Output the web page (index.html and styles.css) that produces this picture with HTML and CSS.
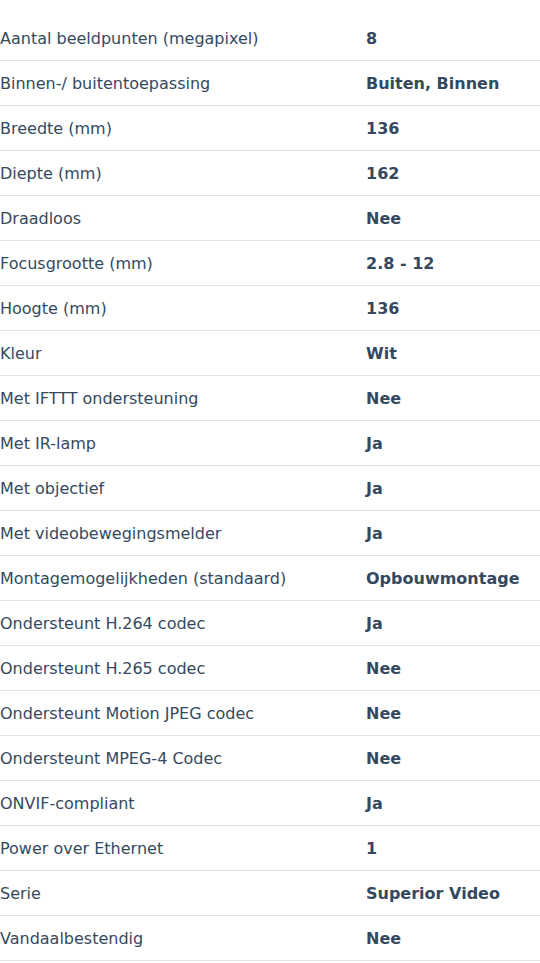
FILE: index.html
```html
<!DOCTYPE html>
<html>
<head>
<meta charset="utf-8">
<link rel="stylesheet" href="styles.css">
</head>
<body>
<div class="specs">
  <div class="row"><div class="label">Aantal beeldpunten (megapixel)</div><div class="value">8</div></div>
  <div class="row"><div class="label">Binnen-/ buitentoepassing</div><div class="value">Buiten, Binnen</div></div>
  <div class="row"><div class="label">Breedte (mm)</div><div class="value">136</div></div>
  <div class="row"><div class="label">Diepte (mm)</div><div class="value">162</div></div>
  <div class="row"><div class="label">Draadloos</div><div class="value">Nee</div></div>
  <div class="row"><div class="label">Focusgrootte (mm)</div><div class="value">2.8 - 12</div></div>
  <div class="row"><div class="label">Hoogte (mm)</div><div class="value">136</div></div>
  <div class="row"><div class="label">Kleur</div><div class="value">Wit</div></div>
  <div class="row"><div class="label">Met IFTTT ondersteuning</div><div class="value">Nee</div></div>
  <div class="row"><div class="label">Met IR-lamp</div><div class="value">Ja</div></div>
  <div class="row"><div class="label">Met objectief</div><div class="value">Ja</div></div>
  <div class="row"><div class="label">Met videobewegingsmelder</div><div class="value">Ja</div></div>
  <div class="row"><div class="label">Montagemogelijkheden (standaard)</div><div class="value">Opbouwmontage</div></div>
  <div class="row"><div class="label">Ondersteunt H.264 codec</div><div class="value">Ja</div></div>
  <div class="row"><div class="label">Ondersteunt H.265 codec</div><div class="value">Nee</div></div>
  <div class="row"><div class="label">Ondersteunt Motion JPEG codec</div><div class="value">Nee</div></div>
  <div class="row"><div class="label">Ondersteunt MPEG-4 Codec</div><div class="value">Nee</div></div>
  <div class="row"><div class="label">ONVIF-compliant</div><div class="value">Ja</div></div>
  <div class="row"><div class="label">Power over Ethernet</div><div class="value">1</div></div>
  <div class="row"><div class="label">Serie</div><div class="value">Superior Video</div></div>
  <div class="row"><div class="label">Vandaalbestendig</div><div class="value">Nee</div></div>
</div>
</body>
</html>
```
FILE: styles.css
```css
html, body {
  margin: 0;
  padding: 0;
  background: #ffffff;
}
body {
  font-family: "DejaVu Sans", Verdana, sans-serif;
  font-size: 16px;
  color: #34495e;
}
.specs {
  padding-top: 16px;
}
.row {
  display: grid;
  grid-template-columns: 366px 1fr;
  height: 44px;
  align-items: center;
  border-bottom: 1px solid #e4e4e4;
}
.label {
  white-space: nowrap;
}
.value {
  font-weight: bold;
  white-space: nowrap;
}
```
